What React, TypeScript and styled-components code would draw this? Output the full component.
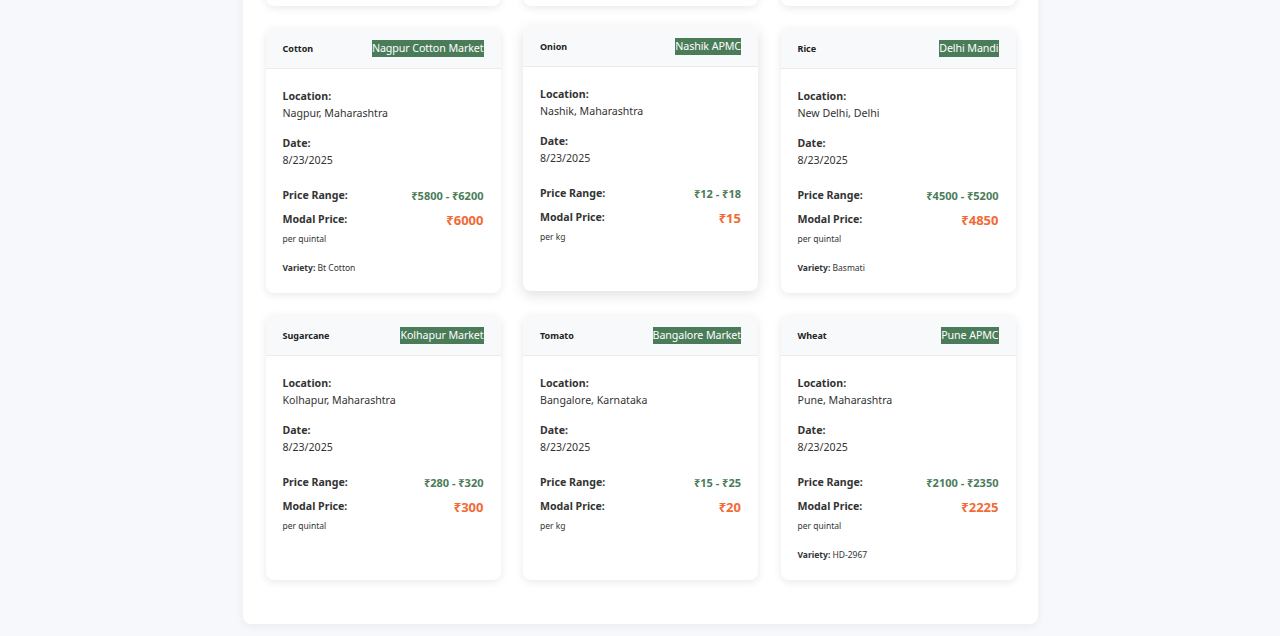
import React, { useLayoutEffect, useRef } from "react";
import styled, { createGlobalStyle } from "styled-components";

const Global = createGlobalStyle`
  html, body { margin: 0; padding: 0; background: #f6f8fb; }
  body { font-family: "Noto Sans", "Open Sans", sans-serif; color: #333; }
  * { box-sizing: border-box; }
`;

const Page = styled.div`
  padding: 24px 0 12px;
  display: flex;
  justify-content: center;
`;

const Container = styled.div`
  width: 795px;
  background: #fff;
  border-radius: 8px;
  box-shadow: 0 2px 10px rgba(0, 0, 0, 0.06);
  padding: 24px 22px 44px 23px;
`;

const Grid = styled.div`
  display: grid;
  grid-template-columns: repeat(3, 235px);
  column-gap: 22.5px;
  row-gap: 22px;
`;

const Card = styled.div<{ $raised?: boolean }>`
  background: #fff;
  border-radius: 8px;
  overflow: hidden;
  display: flex;
  flex-direction: column;
  min-height: 265px;
  transform: ${(p) => (p.$raised ? "translateY(-2px)" : "none")};
  box-shadow: ${(p) =>
    p.$raised ? "0 4px 14px rgba(0,0,0,0.13)" : "0 2px 8px rgba(0,0,0,0.09)"};
`;

const Header = styled.div`
  height: 41px;
  background: #f8f9fa;
  border-bottom: 1px solid #e9ecef;
  display: flex;
  align-items: center;
  justify-content: space-between;
  padding: 0 17px;
`;

const Crop = styled.span`
  font-size: 9px;
  font-weight: 700;
  color: #222;
`;

const Badge = styled.span`
  background: #4a7c59;
  color: #fff;
  font-size: 10.7px;
  line-height: 17px;
  height: 17px;
  padding: 0;
  letter-spacing: -0.1px;
`;

const Body = styled.div`
  padding: 20px 17px 17px;
  display: flex;
  flex-direction: column;
`;

const Field = styled.div`
  margin-bottom: 15px;
`;

const Label = styled.div`
  font-size: 10.6px;
  font-weight: 700;
  color: #333;
  line-height: 15px;
`;

const Value = styled.div`
  font-size: 10.6px;
  color: #333;
  line-height: 15px;
  margin-top: 2px;
`;

const PriceRow = styled.div<{ $top: number }>`
  display: flex;
  justify-content: space-between;
  align-items: center;
  margin-top: ${(p) => p.$top}px;
  height: 17px;
`;

const Range = styled.span`
  font-size: 11px;
  font-weight: 700;
  color: #4a7c59;
`;

const Modal = styled.span`
  font-size: 13px;
  font-weight: 700;
  color: #f26a36;
`;

const Unit = styled.div`
  font-size: 8.5px;
  color: #333;
  margin-top: 5px;
`;

const Variety = styled.div`
  font-size: 8.5px;
  color: #333;
  margin-top: 18px;
  b { font-weight: 700; }
`;

type Item = {
  crop: string;
  market: string;
  location: string;
  range: string;
  modal: string;
  unit: string;
  variety?: string;
};

const prev: Item[] = [
  { crop: "Potato", market: "Agra Mandi", location: "Agra, Uttar Pradesh", range: "₹800 - ₹1200", modal: "₹1000", unit: "per quintal" },
  { crop: "Maize", market: "Indore Mandi", location: "Indore, Madhya Pradesh", range: "₹1800 - ₹2100", modal: "₹1950", unit: "per quintal" },
  { crop: "Soybean", market: "Latur APMC", location: "Latur, Maharashtra", range: "₹4200 - ₹4600", modal: "₹4400", unit: "per quintal" },
];

const items: Item[] = [
  { crop: "Cotton", market: "Nagpur Cotton Market", location: "Nagpur, Maharashtra", range: "₹5800 - ₹6200", modal: "₹6000", unit: "per quintal", variety: "Bt Cotton" },
  { crop: "Onion", market: "Nashik APMC", location: "Nashik, Maharashtra", range: "₹12 - ₹18", modal: "₹15", unit: "per kg" },
  { crop: "Rice", market: "Delhi Mandi", location: "New Delhi, Delhi", range: "₹4500 - ₹5200", modal: "₹4850", unit: "per quintal", variety: "Basmati" },
  { crop: "Sugarcane", market: "Kolhapur Market", location: "Kolhapur, Maharashtra", range: "₹280 - ₹320", modal: "₹300", unit: "per quintal" },
  { crop: "Tomato", market: "Bangalore Market", location: "Bangalore, Karnataka", range: "₹15 - ₹25", modal: "₹20", unit: "per kg" },
  { crop: "Wheat", market: "Pune APMC", location: "Pune, Maharashtra", range: "₹2100 - ₹2350", modal: "₹2225", unit: "per quintal", variety: "HD-2967" },
];

function PriceCard({ item, raised, anchorRef }: { item: Item; raised?: boolean; anchorRef?: React.Ref<HTMLDivElement> }) {
  return (
    <Card $raised={raised} ref={anchorRef}>
      <Header>
        <Crop>{item.crop}</Crop>
        <Badge>{item.market}</Badge>
      </Header>
      <Body>
        <Field>
          <Label>Location:</Label>
          <Value>{item.location}</Value>
        </Field>
        <Field>
          <Label>Date:</Label>
          <Value>8/23/2025</Value>
        </Field>
        <PriceRow $top={4}>
          <Label>Price Range:</Label>
          <Range>{item.range}</Range>
        </PriceRow>
        <PriceRow $top={7}>
          <Label>Modal Price:</Label>
          <Modal>{item.modal}</Modal>
        </PriceRow>
        <Unit>{item.unit}</Unit>
        {item.variety && (
          <Variety>
            <b>Variety:</b> {item.variety}
          </Variety>
        )}
      </Body>
    </Card>
  );
}

export default function App() {
  const anchor = useRef<HTMLDivElement>(null);
  useLayoutEffect(() => {
    const el = anchor.current;
    if (!el) return;
    const top = el.getBoundingClientRect().top + window.scrollY;
    window.scrollTo(0, top - 28);
  }, []);
  return (
    <>
      <Global />
      <Page>
        <Container>
          <Grid>
            {prev.map((it) => (
              <PriceCard key={it.crop} item={it} />
            ))}
            {items.map((it, i) => (
              <PriceCard key={it.crop} item={it} raised={i === 1} anchorRef={i === 0 ? anchor : undefined} />
            ))}
          </Grid>
        </Container>
      </Page>
    </>
  );
}
